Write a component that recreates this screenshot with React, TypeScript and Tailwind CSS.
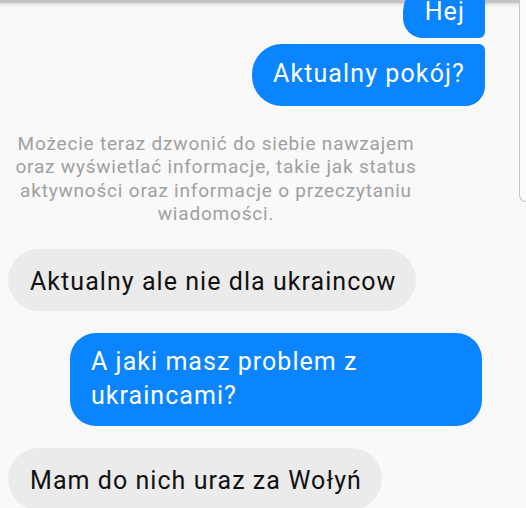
export default function App() {
  return (
    <div className="relative h-[508px] w-[526px] overflow-hidden bg-[#f9f9f9] bg-[linear-gradient(to_bottom,#c9c9c9_0px,#bdbdbd_2px,#e6e6e6_4px,#f9f9f9_7px)] font-['Roboto',sans-serif]">
      <div className="flex flex-col">
        {/* own messages */}
        <div className="mr-[41px] mt-[-18px] self-end rounded-bl-[20px] rounded-br-[6px] rounded-tl-[30px] rounded-tr-[6px] bg-[#0a84ff] pb-[8px] pl-[22px] pr-[20px] pt-[12px] text-[25px] leading-[36px] tracking-[1.1px] text-white">
          Hej
        </div>
        <div className="mr-[41px] mt-[6px] self-end rounded-bl-[30px] rounded-br-[20px] rounded-tl-[30px] rounded-tr-[6px] bg-[#0a84ff] pb-[14px] pl-[21px] pr-[20px] pt-[12px] text-[25px] leading-[36px] tracking-[1.1px] text-white">
          Aktualny pokój?
        </div>

        {/* system notice */}
        <p className="mt-[26px] w-[432px] whitespace-nowrap text-center text-[19px] leading-[23.3px] tracking-[0.8px] text-[#a0a0a0]">
          Możecie teraz dzwonić do siebie nawzajem
          <br />
          oraz wyświetlać informacje, takie jak status
          <br />
          aktywności oraz informacje o przeczytaniu
          <br />
          wiadomości.
        </p>

        {/* conversation */}
        <div className="ml-[8px] mt-[24px] self-start rounded-[31px] bg-[#ebebeb] pb-[11px] pl-[22px] pr-[20px] pt-[15px] text-[25px] leading-[36px] tracking-[1.05px] text-[#111]">
          Aktualny ale nie dla ukraincow
        </div>
        <div className="mr-[44px] mt-[22px] w-[412px] self-end rounded-[26px] bg-[#0a84ff] px-[21px] pb-[13px] pt-[12px] text-[25px] leading-[34px] tracking-[1.05px] text-white">
          A jaki masz problem z
          <br />
          ukraincami?
        </div>
        <div className="ml-[8px] mt-[22px] self-start rounded-[31px] bg-[#ebebeb] pb-[11px] pl-[22px] pr-[20px] pt-[15px] text-[25px] leading-[36px] tracking-[1.05px] text-[#111]">
          Mam do nich uraz za Wołyń
        </div>
      </div>

      {/* edge of side panel */}
      <div className="absolute right-0 top-0 h-[202px] w-[7px] rounded-bl-[8px] border-b border-l border-[#c4c4c4] bg-[#fbfbfb]" />
    </div>
  );
}
